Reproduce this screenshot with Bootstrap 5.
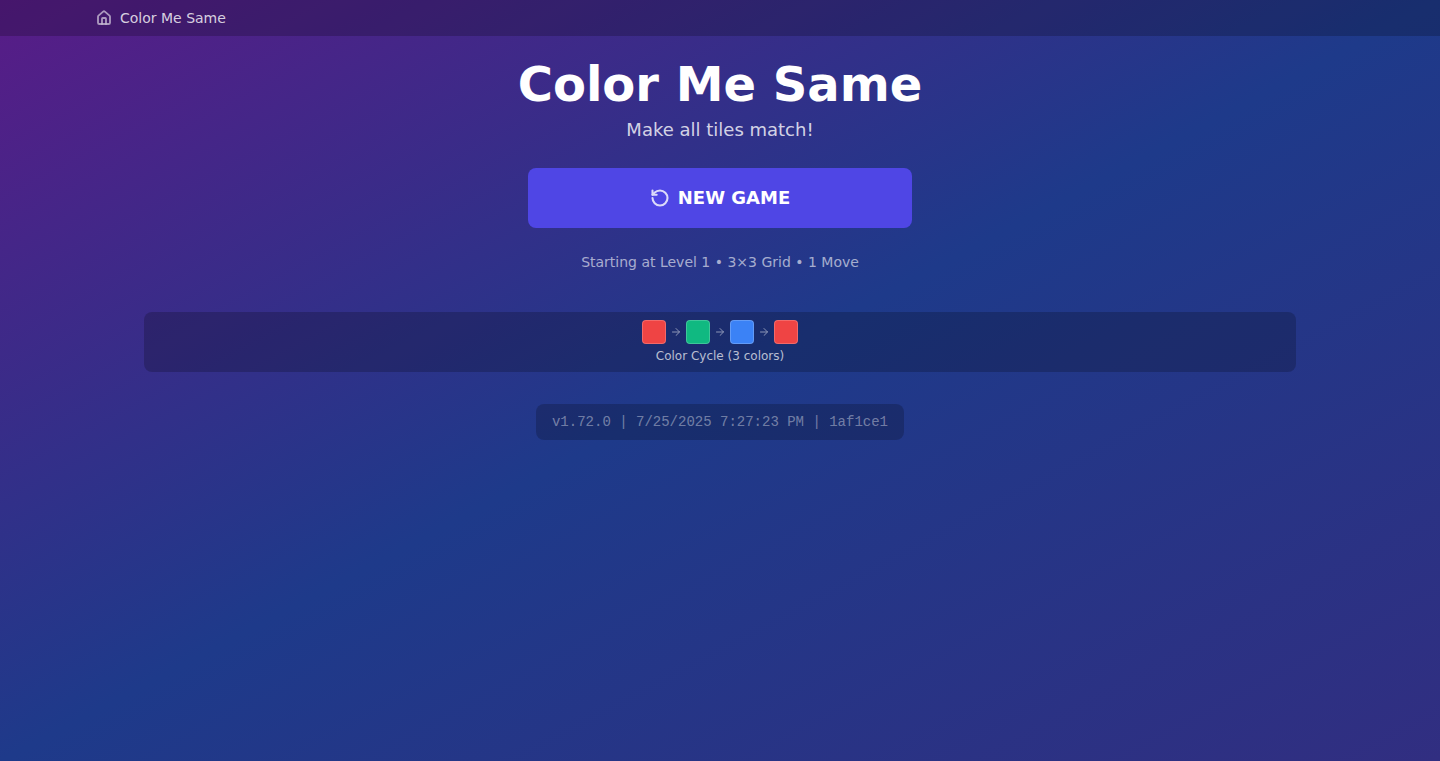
<!DOCTYPE html>
<html lang="en">
<head>
<meta charset="utf-8">
<meta name="viewport" content="width=device-width, initial-scale=1">
<title>Color Me Same</title>
<link href="https://cdn.jsdelivr.net/npm/bootstrap@5.3.0/dist/css/bootstrap.min.css" rel="stylesheet">
<style>
body{font-family:"DejaVu Sans",sans-serif;color:#fff;background:linear-gradient(to bottom right,#581c87,#1e3a8a,#312e81) no-repeat;min-height:100vh}
.topbar{background:rgba(0,0,0,.2)}
.topbar-inner{max-width:1280px;padding:8px 16px}
.home-link{color:rgba(255,255,255,.8);font-size:14px;line-height:20px}
.page{max-width:1184px;padding:16px}
.title{font-size:48px;line-height:48px;font-weight:700;margin:8px 0}
.tagline{font-size:18px;line-height:28px;color:rgba(255,255,255,.8)}
.btn-new{width:384px;max-width:100%;padding:16px;background:#4f46e5;color:#fff;font-size:18px;line-height:28px;font-weight:700;border:0;border-radius:8px}
.btn-new:hover{background:#4338ca;color:#fff}
.level{font-size:14px;line-height:20px;color:rgba(255,255,255,.6)}
.cycle{background:rgba(0,0,0,.2);border-radius:8px;margin-top:40px}
.swatch{width:24px;height:24px;border-radius:4px;border:1px solid rgba(255,255,255,.2)}
.red{background-color:#ef4444}.green{background-color:#10b981}.blue{background-color:#3b82f6}
.caption-text{font-size:12px;line-height:16px;color:rgba(255,255,255,.7)}
.page-footer{margin-top:32px}
.version{font-family:"Liberation Mono",monospace;font-size:14px;line-height:20px;color:rgba(255,255,255,.4);background:rgba(0,0,0,.2);border-radius:8px}
.icon{fill:none;stroke:currentColor;stroke-width:2;stroke-linecap:round;stroke-linejoin:round}
.home-icon{opacity:.7;stroke-width:2.75}
.reset-icon{opacity:.8;stroke-width:2.5}
.arrow{opacity:.5}
</style>
</head>
<body>
<nav class="topbar">
<div class="topbar-inner mx-auto d-flex">
<a href="#" class="home-link d-flex align-items-center gap-2 text-decoration-none">
<svg class="icon home-icon" width="16" height="16" viewBox="0 0 24 24" aria-hidden="true"><path d="M15 21v-8a1 1 0 0 0-1-1h-4a1 1 0 0 0-1 1v8"/><path d="M3 10a2 2 0 0 1 .709-1.528l7-5.999a2 2 0 0 1 2.582 0l7 5.999A2 2 0 0 1 21 10v9a2 2 0 0 1-2 2H5a2 2 0 0 1-2-2z"/></svg>
<span>Color Me Same</span></a>
</div>
</nav>
<main class="page mx-auto text-center">
<h1 class="title">Color Me Same</h1>
<p class="tagline mb-4">Make all tiles match!</p>
<button type="button" class="btn btn-new d-inline-flex align-items-center justify-content-center gap-2">
<svg class="icon reset-icon" width="20" height="20" viewBox="0 0 24 24" aria-hidden="true"><path d="M3 12a9 9 0 1 0 9-9 9.75 9.75 0 0 0-6.74 2.74L3 8"/><path d="M3 3v5h5"/></svg>
<span>NEW GAME</span></button>
<p class="level mt-4 mb-0">Starting at Level 1 • 3×3 Grid • 1 Move</p>
<section class="cycle p-2">
<div class="d-flex align-items-center justify-content-center gap-1">
<span class="swatch red"></span>
<svg class="icon arrow" width="12" height="12" viewBox="0 0 24 24" aria-hidden="true"><path d="M5 12h14"/><path d="m12 5 7 7-7 7"/></svg>
<span class="swatch green"></span>
<svg class="icon arrow" width="12" height="12" viewBox="0 0 24 24" aria-hidden="true"><path d="M5 12h14"/><path d="m12 5 7 7-7 7"/></svg>
<span class="swatch blue"></span>
<svg class="icon arrow" width="12" height="12" viewBox="0 0 24 24" aria-hidden="true"><path d="M5 12h14"/><path d="m12 5 7 7-7 7"/></svg>
<span class="swatch red"></span>
</div>
<div class="caption-text mt-1">Color Cycle (3 colors)</div>
</section>
<footer class="page-footer"><span class="version d-inline-block px-3 py-2">v1.72.0 | 7/25/2025 7:27:23 PM | 1af1ce1</span></footer>
</main>
<script src="https://cdn.jsdelivr.net/npm/bootstrap@5.3.0/dist/js/bootstrap.bundle.min.js"></script>
</body>
</html>
